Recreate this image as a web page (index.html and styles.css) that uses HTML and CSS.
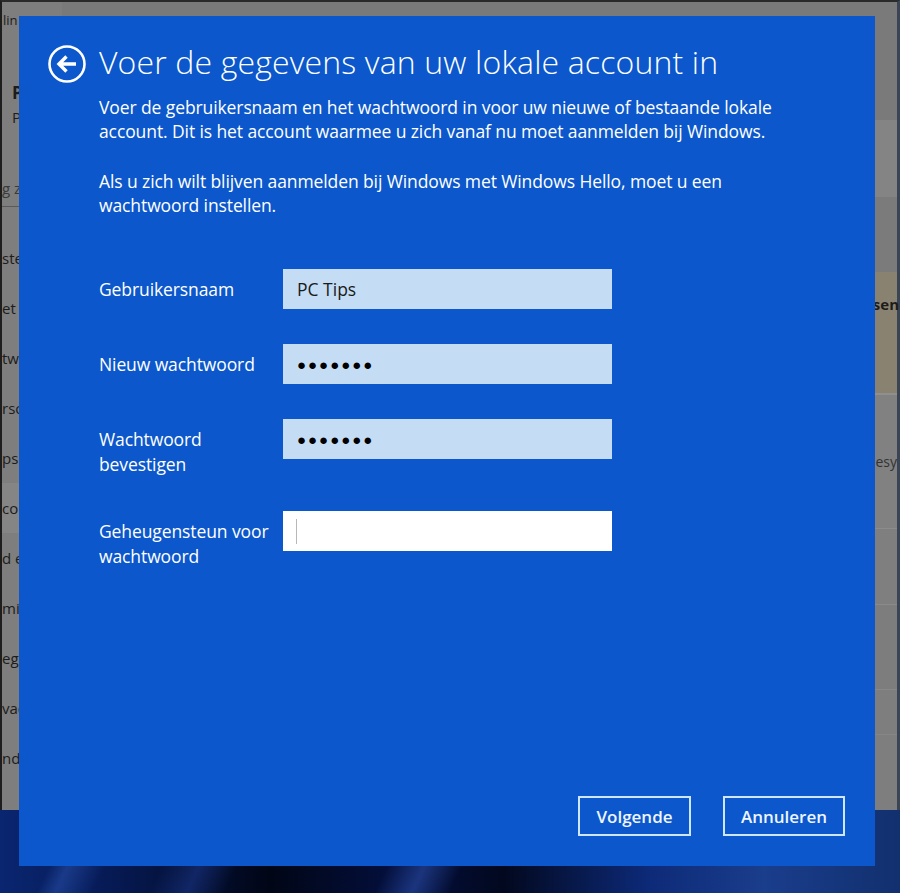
FILE: index.html
```html
<!DOCTYPE html>
<html lang="nl">
<head>
<meta charset="utf-8">
<title>Lokaal account</title>
<link rel="stylesheet" href="styles.css">
</head>
<body>
<div class="desktop">
  <div class="settings">
    <nav class="nav">
      <div class="nav-title">lin</div>
      <div class="profile">
        <div class="profile-name">P</div>
        <div class="profile-sub">P</div>
      </div>
      <div class="search">g z</div>
      <ul class="nav-list">
        <li>ste</li>
        <li>et</li>
        <li>tw</li>
        <li>rso</li>
        <li>ps</li>
        <li class="active">co</li>
        <li>d e</li>
        <li>mi</li>
        <li>ega</li>
        <li>vac</li>
        <li>nd</li>
      </ul>
    </nav>
    <main class="content">
      <div class="card card-top"></div>
      <div class="card card-light"></div>
      <div class="card card-plain"></div>
      <div class="card card-warn"><span class="warn-text">sen</span></div>
      <div class="card card-row"><span class="row-text">esy</span></div>
      <div class="card card-row2"></div>
      <div class="card card-row3"></div>
      <div class="card card-row4"></div>
    </main>
  </div>
  <div class="wallpaper"></div>
</div>

<div class="dialog">
  <header class="dlg-head">
    <svg class="back" width="40" height="40" viewBox="0 0 40 40" aria-hidden="true">
      <circle cx="20" cy="20" r="17.5" fill="none" stroke="#ffffff" stroke-width="2.6"/>
      <path d="M29 20H12.5M19.5 12.5L12 20l7.5 7.5" fill="none" stroke="#ffffff" stroke-width="3.4" stroke-linecap="butt" stroke-linejoin="miter"/>
    </svg>
    <h1 class="title">Voer de gegevens van uw lokale account in</h1>
  </header>
  <div class="body">
    <p class="text">Voer de gebruikersnaam en het wachtwoord in voor uw nieuwe of bestaande lokale account. Dit is het account waarmee u zich vanaf nu moet aanmelden bij Windows.</p>
    <p class="text">Als u zich wilt blijven aanmelden bij Windows met Windows Hello, moet u een wachtwoord instellen.</p>

    <div class="form">
      <div class="row">
        <label class="label">Gebruikersnaam</label>
        <div class="field">PC Tips</div>
      </div>
      <div class="row">
        <label class="label">Nieuw wachtwoord</label>
        <div class="field dots">●●●●●●●</div>
      </div>
      <div class="row">
        <label class="label">Wachtwoord<br>bevestigen</label>
        <div class="field dots">●●●●●●●</div>
      </div>
      <div class="row">
        <label class="label">Geheugensteun voor<br>wachtwoord</label>
        <div class="field focus"><span class="caret"></span></div>
      </div>
    </div>
  </div>
  <footer class="actions">
    <button class="btn">Volgende</button>
    <button class="btn">Annuleren</button>
  </footer>
</div>
</body>
</html>
```
FILE: styles.css
```css
html, body {
  margin: 0;
  padding: 0;
  width: 900px;
  height: 893px;
  overflow: hidden;
  background: #0a1a48;
  font-family: "Open Sans", "Noto Sans", sans-serif;
}

.desktop {
  width: 900px;
  height: 893px;
  display: flex;
  flex-direction: column;
}

.settings {
  height: 808px;
  display: flex;
  background: #7e7e7e;
  border-top: 2px solid #2a2a2a;
  border-left: 2px solid #1e1e1e;
  border-right: 3px solid #3b4454;
  color: #1c1c1c;
  font-size: 15px;
}

.nav {
  width: 60px;
  display: flex;
  flex-direction: column;
  overflow: hidden;
}

.nav-title {
  height: 30px;
  line-height: 36px;
  font-size: 13px;
  padding-left: 1px;
}

.profile {
  padding-top: 48px;
  padding-left: 10px;
  height: 84px;
  box-sizing: border-box;
  font-size: 17px;
}
.profile-name { font-weight: 700; height: 25px; line-height: 25px; }
.profile-sub { height: 25px; line-height: 25px; font-size: 15px; }

.search {
  margin-top: 47px;
  height: 44px;
  line-height: 30px;
  border-bottom: 1px solid #5a5a5a;
  color: #3a3a3a;
  font-size: 15px;
  box-sizing: border-box;
  padding-top: 10px;
}

.nav-list {
  list-style: none;
  margin: 26px 0 0;
  padding: 0;
}
.nav-list li {
  height: 50px;
  line-height: 50px;
  font-size: 15px;
  padding-left: 0;
}
.nav-list li.active {
  background: #858585;
}

.content {
  flex: 1;
  display: flex;
  flex-direction: column;
}

.card { width: 100%; position: relative; }
.card-top { height: 118px; background: #7a7a7a; }
.card-light { height: 77px; background: #848484; }
.card-plain { height: 75px; background: #7b7b7b; }
.card-warn {
  height: 123px;
  background: #8a8270;
  border-bottom: 2px solid #8f8f8f;
  display: flex;
  justify-content: flex-end;
  padding-top: 22px;
  box-sizing: border-box;
}
.warn-text { font-weight: 700; font-size: 15px; margin-right: -2px; }
.card-row {
  height: 133px;
  background: #818181;
  border-bottom: 1px solid #8c8c8c;
  display: flex;
  justify-content: flex-end;
  align-items: center;
}
.row-text { font-size: 14px; color: #333; }
.card-row2 { height: 75px; background: #7f7f7f; border-bottom: 1px solid #8a8a8a; }
.card-row3 { height: 84px; background: #7d7d7d; border-bottom: 1px solid #888; }
.card-row4 { flex: 1; background: #7e7e7e; border-top: 1px solid #868686; margin-top: 44px; }

.wallpaper {
  flex: 1;
  background:
    linear-gradient(115deg, transparent 0 8%, rgba(40,80,170,0.55) 10%, transparent 14%, transparent 20%, rgba(30,60,150,0.5) 24%, transparent 28%, transparent 44%, rgba(50,90,190,0.5) 48%, transparent 52%),
    linear-gradient(90deg, #0a2670 0%, #061a55 12%, #010616 30%, #041040 45%, #02081e 56%, #0d2a78 72%, #1a3d8c 85%, #12306e 100%);
}

/* Dialog */
.dialog {
  position: absolute;
  left: 19px;
  top: 16px;
  width: 856px;
  height: 850px;
  background: #0b57cb;
  color: #ffffff;
  box-sizing: border-box;
  padding: 0 30px 30px 0;
  display: flex;
  flex-direction: column;
}

.dlg-head {
  display: flex;
  align-items: center;
  padding-left: 28px;
  height: 98px;
  box-sizing: border-box;
}
.back {
  flex: none;
  margin-right: 12px;
  margin-top: -3px;
}
.title {
  margin: -8px 0 0;
  font-weight: 300;
  font-size: 32px;
  letter-spacing: 0.15px;
  white-space: nowrap;
}

.body {
  padding-left: 80px;
  flex: 1;
  width: 696px;
}

.text {
  margin: -19px 0 26px;
  font-size: 17.5px;
  line-height: 24px;
  letter-spacing: -0.1px;
}
.text + .text { margin-top: 0; }

.form {
  margin-top: 52px;
  display: flex;
  flex-direction: column;
  gap: 35px;
}

.row {
  display: flex;
  align-items: flex-start;
}
.label {
  width: 184px;
  flex: none;
  padding-top: 8px;
  font-size: 17.5px;
  line-height: 24.5px;
  letter-spacing: -0.1px;
}
.field {
  width: 329px;
  height: 40px;
  box-sizing: border-box;
  background: #c4ddf4;
  color: #1a1a1a;
  font-size: 17.5px;
  line-height: 40px;
  padding-left: 14px;
}
.field.dots {
  font-size: 15px;
  letter-spacing: 2px;
  color: #000;
}
.field.focus {
  background: #ffffff;
  display: flex;
  align-items: center;
  padding-left: 13px;
}
.caret {
  width: 1px;
  height: 25px;
  background: #b8b8b8;
}

.actions {
  display: flex;
  justify-content: flex-end;
  gap: 32px;
}
.btn {
  height: 40px;
  box-sizing: border-box;
  border: 2px solid #cfe6ff;
  background: transparent;
  color: #eef5ff;
  font-family: "Open Sans", "Noto Sans", sans-serif;
  font-weight: 600;
  font-size: 17px;
  padding: 0 10px;
}
.btn:first-child { width: 113px; }
.btn:last-child { width: 122px; }
```
